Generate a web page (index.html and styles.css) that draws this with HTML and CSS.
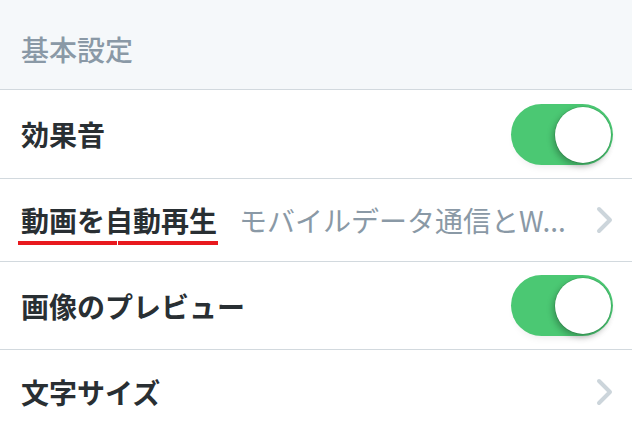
FILE: index.html
```html
<!DOCTYPE html>
<html lang="ja">
<head>
<meta charset="utf-8">
<link rel="stylesheet" href="styles.css">
</head>
<body>
<div class="settings">
  <div class="section-header">基本設定</div>
  <div class="row row-a">
    <span class="label">効果音</span>
    <span class="toggle on"><span class="knob"></span></span>
  </div>
  <div class="row row-b">
    <span class="label marked">動画を自動再生<span class="mark"><span class="seg seg1"></span><span class="seg seg2"></span></span></span>
    <span class="value">モバイルデータ通信とW...</span>
    <svg class="chevron" width="18" height="28" viewBox="0 0 18 28"><path d="M3 3 L14 14 L3 25" fill="none" stroke="#ccd5db" stroke-width="4" stroke-linecap="round" stroke-linejoin="round"/></svg>
  </div>
  <div class="row row-c">
    <span class="label">画像のプレビュー</span>
    <span class="toggle on"><span class="knob"></span></span>
  </div>
  <div class="row row-d">
    <span class="label">文字サイズ</span>
    <span class="spacer"></span>
    <svg class="chevron" width="18" height="28" viewBox="0 0 18 28"><path d="M3 3 L14 14 L3 25" fill="none" stroke="#ccd5db" stroke-width="4" stroke-linecap="round" stroke-linejoin="round"/></svg>
  </div>
</div>
</body>
</html>
```
FILE: styles.css
```css
html, body {
  margin: 0;
  padding: 0;
  background: #ffffff;
}
body {
  width: 632px;
  height: 432px;
  overflow: hidden;
  font-family: "Noto Sans CJK JP", "Noto Sans", sans-serif;
}
.settings {
  display: flex;
  flex-direction: column;
}
.section-header {
  height: 90px;
  box-sizing: border-box;
  background: #f5f8fa;
  border-bottom: 1px solid #d2d9de;
  color: #8a99a6;
  font-size: 28px;
  font-weight: 500;
  line-height: 1;
  display: flex;
  align-items: center;
  padding: 8px 0 0 21px;
}
.row {
  display: flex;
  align-items: center;
  padding: 0 19px 0 21px;
  border-bottom: 1px solid #d2d9de;
  box-sizing: border-box;
}
.row-a { height: 89px; }
.row-b { height: 83px; }
.row-c { height: 88px; }
.row-d { height: 83px; border-bottom: none; }
.label {
  color: #292f33;
  font-size: 28px;
  font-weight: 700;
  line-height: 1;
  flex: 0 0 auto;
}
.marked {
  position: relative;
}
.mark {
  position: absolute;
  left: -3px;
  top: 35px;
  width: 200px;
  height: 4px;
  display: flex;
  gap: 1px;
}
.seg {
  background: #e8191e;
  height: 4px;
}
.seg1 { width: 99px; }
.seg2 { width: 100px; }
.value {
  flex: 1 1 auto;
  color: #8a99a6;
  font-size: 28px;
  font-weight: 400;
  line-height: 1;
  margin-left: 22px;
  white-space: nowrap;
}
.spacer { flex: 1 1 auto; }
.chevron {
  flex: 0 0 auto;
  margin-left: 8px;
  margin-right: -1px;
}
.toggle {
  margin-left: auto;
  width: 102px;
  height: 61px;
  border-radius: 31px;
  background: #4bc873;
  position: relative;
  flex: 0 0 auto;
  box-shadow: 0 6px 10px -6px rgba(0,0,0,0.12);
}
.knob {
  position: absolute;
  right: 2px;
  top: 3px;
  width: 56px;
  height: 56px;
  border-radius: 50%;
  background: #ffffff;
  box-shadow: -2px 3px 6px rgba(0,0,0,0.28), 0 0 0 0.5px rgba(0,90,30,0.25);
}
```
